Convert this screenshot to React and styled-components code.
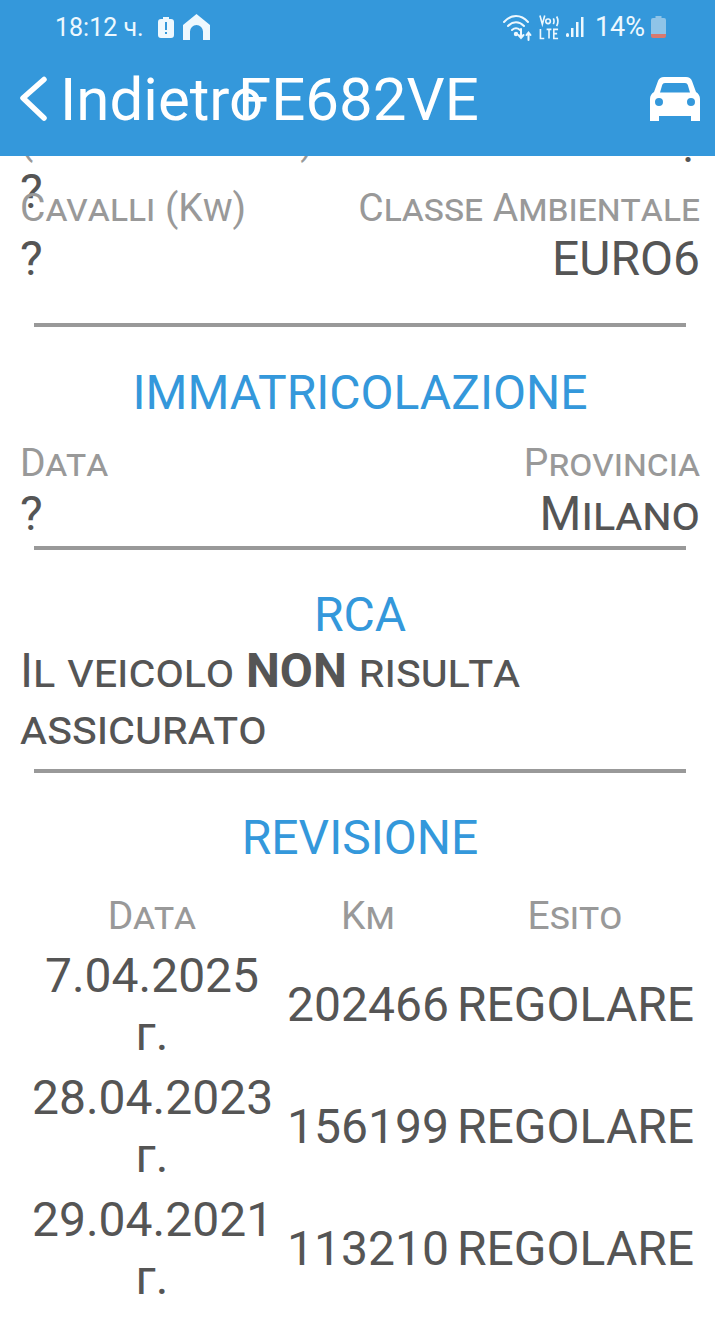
import React from 'react';
import styled, { createGlobalStyle } from 'styled-components';

const GlobalStyle = createGlobalStyle`
  html, body {
    margin: 0;
    padding: 0;
    background: #fff;
    font-family: Roboto, "Liberation Sans", sans-serif;
  }
`;

const Screen = styled.div`
  width: 715px;
  height: 1331px;
  overflow: hidden;
  background: #fff;
  display: flex;
  flex-direction: column;
`;

const Header = styled.header`
  flex: none;
  height: 156px;
  background: #3498db;
  color: #fff;
  position: relative;
  z-index: 2;
`;

const StatusBar = styled.div`
  height: 54px;
  display: flex;
  align-items: center;
  justify-content: space-between;
  padding: 0 49px 0 55px;
  font-size: 25px;
  color: #eef8fe;
`;

const StatusGroup = styled.div`
  display: flex;
  align-items: center;
  gap: ${props => props.$gap || 6}px;
`;

const Clock = styled.span`
  margin-right: 5px;
`;

const Percent = styled.span`
  font-size: 27px;
  margin-left: 5px;
`;

const NavBar = styled.div`
  height: 90px;
  display: flex;
  align-items: center;
  padding: 0 15px 0 19px;
  position: relative;
`;

const BackLabel = styled.span`
  font-size: 60px;
  margin-left: 13px;
`;

const Plate = styled.span`
  position: absolute;
  left: 238px;
  top: 10px;
  font-size: 60px;
`;

const CarSlot = styled.div`
  margin-left: auto;
  display: flex;
`;

const Content = styled.main`
  flex: 1;
  overflow: hidden;
  padding: 0 15px 0 20px;
`;

const Scroller = styled.div`
  margin-top: -38px;
`;

const Row = styled.div`
  display: flex;
  justify-content: space-between;
  height: ${props => props.$height}px;
`;

const Col = styled.div`
  display: flex;
  flex-direction: column;
  align-items: ${props => (props.$right ? 'flex-end' : 'flex-start')};
`;

const Label = styled.span`
  font-size: 39px;
  line-height: 46px;
  font-variant: small-caps;
  color: #999;
  white-space: nowrap;
`;

const Value = styled.span`
  font-size: 48px;
  line-height: 56px;
  color: #555;
  white-space: nowrap;
  font-variant: ${props => (props.$caps ? 'small-caps' : 'normal')};
`;

const Divider = styled.hr`
  border: 0;
  height: 4px;
  background: #999;
  margin: ${props => props.$top}px 14px 0 14px;
`;

const SectionTitle = styled.h2`
  margin: ${props => props.$top}px 0 ${props => props.$bottom || 0}px;
  font-size: 48px;
  line-height: 54px;
  font-weight: 400;
  text-align: center;
  color: #3498db;
`;

const Notice = styled.p`
  margin: 0;
  width: 560px;
  font-size: 48px;
  line-height: 57px;
  font-variant: small-caps;
  color: #555;

  b {
    font-weight: 700;
  }
`;

const Table = styled.div`
  display: grid;
  grid-template-columns: 240px 185px 236px;
  row-gap: 6px;
  margin: 26px 0 0;
  padding-left: 12px;
  text-align: center;
  align-items: center;
`;

const HeadCell = styled.div`
  font-size: 39px;
  line-height: 50px;
  font-variant: small-caps;
  color: #999;
  padding-left: ${props => props.$inset || 0}px;
`;

const Cell = styled.div`
  font-size: 48px;
  line-height: 58px;
  color: #555;
  white-space: ${props => (props.$wrap ? 'normal' : 'nowrap')};
  padding-left: ${props => props.$inset || 0}px;
`;

const BackChevron = () => (
  <svg width="28" height="46" viewBox="0 0 28 46" fill="none">
    <path d="M25 3.500 4 22l21 20" stroke="#fff" strokeWidth="5.500" strokeLinecap="round" strokeLinejoin="round" />
  </svg>
);

const BatteryAlert = () => (
  <svg width="16" height="21" viewBox="0 0 16 21">
    <path fillRule="evenodd" fill="#eef8fe" d="M3 2h2V0h6v2h2a3 3 0 0 1 3 3v13a3 3 0 0 1-3 3H3a3 3 0 0 1-3-3V5a3 3 0 0 1 3-3Zm4 3v8h2V5H7Zm0 10v2h2v-2H7Z" />
  </svg>
);

const HomeIcon = () => (
  <svg width="27" height="26" viewBox="0 0 27 26">
    <path fill="#eef8fe" d="M13.500 0 27 11v15h-7V17.500a6.500 6.500 0 0 0-13 0V26H0V11L13.500 0Z" />
  </svg>
);

const WifiIcon = () => (
  <svg width="30" height="27" viewBox="0 0 30 27" fill="none" stroke="#eef8fe" strokeWidth="2" strokeLinecap="round">
    <path d="M1 8c7-8 17-8 24 0" />
    <path d="M5 12c5-5 11-5 16 0" />
    <path d="M9 16c3-2.500 5-2.500 8 0" />
    <circle cx="13" cy="20" r="1.200" fill="#eef8fe" />
    <path d="M18 15v9M15.500 21l2.500 3 2.500-3" />
    <path d="M25.500 26v-7M23.500 21l2-2.500 2 2.500" />
  </svg>
);

const VolteIcon = () => (
  <svg width="21" height="28" viewBox="0 0 22 28" fill="none" stroke="#eef8fe" strokeWidth="1.700">
    <path d="M1 2l2.500 9L6 2" />
    <circle cx="9.500" cy="8" r="2.400" />
    <path d="M15 5c1 2 1 4 0 6M18.500 3c1.600 3 1.600 7 0 10" />
    <path d="M1.500 16v10h4M8 16.500h5M10.500 16.500V26M20 16.500h-4.500V26H20M15.500 21H19" />
  </svg>
);

const SignalIcon = () => (
  <svg width="18" height="20" viewBox="0 0 18 20" fill="#eef8fe">
    <rect x="0" y="16" width="3" height="4" rx="1.500" />
    <rect x="5" y="11" width="2.500" height="9" />
    <rect x="10" y="5" width="2.500" height="15" />
    <rect x="15" y="0" width="2.500" height="20" />
  </svg>
);

const BatteryLow = () => (
  <svg width="15" height="22" viewBox="0 0 15 22">
    <path fill="#8fc4e8" d="M4.500 0h6v2H13a2 2 0 0 1 2 2v14H0V4a2 2 0 0 1 2-2h2.500V0Z" />
    <path fill="#d9796f" d="M0 18h15v2a2 2 0 0 1-2 2H2a2 2 0 0 1-2-2v-2Z" />
  </svg>
);

const CarIcon = () => (
  <svg width="50" height="44" viewBox="0 0 50 44">
    <path
      fillRule="evenodd"
      fill="#fff"
      d="M14 0h22c3 0 5 1.500 6 4l4 11c2.500 1.500 4 4 4 7v22h-9v-5H9v5H0V22c0-3 1.500-5.500 4-7L8 4c1-2.500 3-4 6-4Zm1 6c-1.500 0-2.300.7-2.800 2L10 15.500h30L37.800 8c-.5-1.300-1.300-2-2.800-2H15ZM9 21a4 4 0 1 0 0 8 4 4 0 0 0 0-8Zm32 0a4 4 0 1 0 0 8 4 4 0 0 0 0-8Z"
    />
  </svg>
);

const revisions = [
  { date: '7.04.2025 г.', km: '202466', result: 'REGOLARE' },
  { date: '28.04.2023 г.', km: '156199', result: 'REGOLARE' },
  { date: '29.04.2021 г.', km: '113210', result: 'REGOLARE' },
];

export default function App() {
  return (
    <>
      <GlobalStyle />
      <Screen>
        <Header>
          <StatusBar>
            <StatusGroup $gap={9}>
              <Clock>18:12 ч.</Clock>
              <BatteryAlert />
              <HomeIcon />
            </StatusGroup>
            <StatusGroup>
              <WifiIcon />
              <VolteIcon />
              <SignalIcon />
              <Percent>14%</Percent>
              <BatteryLow />
            </StatusGroup>
          </StatusBar>
          <NavBar>
            <BackChevron />
            <BackLabel>Indietro</BackLabel>
            <Plate>FE682VE</Plate>
            <CarSlot>
              <CarIcon />
            </CarSlot>
          </NavBar>
        </Header>
        <Content>
          <Scroller>
            <Row $height={67}>
              <Col>
                <Label>(Cilindrata cm³)</Label>
                <Value>?</Value>
              </Col>
              <Col $right>
                <Value>?</Value>
              </Col>
            </Row>
            <Row $height={102}>
              <Col>
                <Label>Cavalli (Kw)</Label>
                <Value>?</Value>
              </Col>
              <Col $right>
                <Label>Classe Ambientale</Label>
                <Value>EURO6</Value>
              </Col>
            </Row>
            <Divider $top={36} />
            <SectionTitle $top={39} $bottom={20}>IMMATRICOLAZIONE</SectionTitle>
            <Row $height={106}>
              <Col>
                <Label>Data</Label>
                <Value>?</Value>
              </Col>
              <Col $right>
                <Label>Provincia</Label>
                <Value $caps>Milano</Value>
              </Col>
            </Row>
            <Divider $top={0} />
            <SectionTitle $top={38}>RCA</SectionTitle>
            <Notice>
              Il veicolo <b>NON</b> risulta assicurato
            </Notice>
            <Divider $top={13} />
            <SectionTitle $top={38}>REVISIONE</SectionTitle>
            <Table>
              <HeadCell>Data</HeadCell>
              <HeadCell $inset={7}>Km</HeadCell>
              <HeadCell>Esito</HeadCell>
              {revisions.map(r => (
                <React.Fragment key={r.date}>
                  <Cell $wrap>{r.date}</Cell>
                  <Cell $inset={7}>{r.km}</Cell>
                  <Cell>{r.result}</Cell>
                </React.Fragment>
              ))}
            </Table>
          </Scroller>
        </Content>
      </Screen>
    </>
  );
}
